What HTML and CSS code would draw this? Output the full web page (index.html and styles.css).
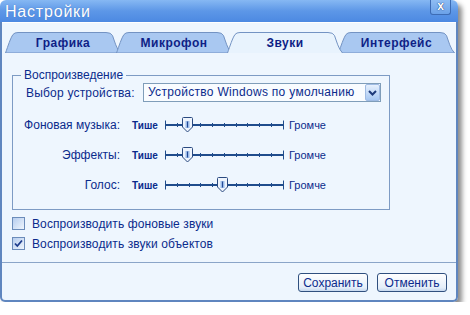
FILE: index.html
```html
<!DOCTYPE html>
<html lang="ru">
<head>
    <meta charset="UTF-8">
    <title>Настройки</title>
    <link rel="stylesheet" href="styles.css">
</head>
<body>
    <div class="window">
        <!-- Title bar -->
        <div class="titlebar">
            <span class="title">Настройки</span>
            <span class="close">x</span>
        </div>

        <div class="frame">
            <!-- Tabs -->
            <div class="tabs">
                <div class="tab">
                    <svg width="116" height="21" viewBox="0 0 116 21"><path class="tab-bg" d="M0.5 21C3 14 5.5 6 8 2.5Q9.5 0.5 13 0.5H101Q106 0.5 107.5 3.5C109.5 9 111.5 17 115.5 21Z"/></svg>
                    <span>Графика</span>
                </div>
                <div class="tab">
                    <svg width="116" height="21" viewBox="0 0 116 21"><path class="tab-bg" d="M0.5 21C3 14 5.5 6 8 2.5Q9.5 0.5 13 0.5H101Q106 0.5 107.5 3.5C109.5 9 111.5 17 115.5 21Z"/></svg>
                    <span>Микрофон</span>
                </div>
                <div class="tab active">
                    <svg width="116" height="21" viewBox="0 0 116 21"><path class="tab-bg" d="M0.5 21C3 14 5.5 6 8 2.5Q9.5 0.5 13 0.5H101Q106 0.5 107.5 3.5C109.5 9 111.5 17 115.5 21"/></svg>
                    <span>Звуки</span>
                </div>
                <div class="tab last">
                    <svg width="117" height="21" viewBox="0 0 117 21"><path class="tab-bg" d="M0.5 21C3 14 5.5 6 8 2.5Q9.5 0.5 13 0.5H102Q107 0.5 108.5 3.5C110.5 9 112.5 17 116.5 21Z"/></svg>
                    <span>Интерфейс</span>
                </div>
            </div>

            <!-- Sound page -->
            <div class="panel">
                <fieldset class="group">
                    <legend>Воспроизведение</legend>

                    <div class="device-row">
                        <span class="device-label">Выбор устройства:</span>
                        <div class="select">
                            <span class="select-value">Устройство Windows по умолчанию</span>
                            <span class="select-btn">
                                <svg width="9" height="6" viewBox="0 0 9 6"><path d="M1 1L4.5 4.5L8 1" fill="none" stroke="#1d3a7a" stroke-width="2"/></svg>
                            </span>
                        </div>
                    </div>

                    <div class="volume-row">
                        <span class="volume-label">Фоновая музыка:</span>
                        <span class="quiet">Тише</span>
                        <svg class="slider" width="119" height="16" viewBox="0 0 119 16">
                            <path class="track" d="M0 8H119"/>
                            <path class="ticks" d="M0.5 3.5V12.5M118.5 3.5V12.5M12.5 6V10M24.5 6V10M35.5 6V10M47.5 6V10M59.5 6V10M71.5 6V10M82.5 6V10M94.5 6V10M106.5 6V10"/>
                            <g transform="translate(22.5 0)">
                                <path class="thumb" d="M-5 1.5Q-5 0.5 -4 0.5H4Q5 0.5 5 1.5V10L0 15L-5 10Z"/>
                                <rect class="thumb-in" x="-2" y="4" width="4" height="7"/>
                                <path class="thumb-line" d="M0 4.5V10.5"/>
                            </g>
                        </svg>
                        <span class="loud">Громче</span>
                    </div>

                    <div class="volume-row">
                        <span class="volume-label">Эффекты:</span>
                        <span class="quiet">Тише</span>
                        <svg class="slider" width="119" height="16" viewBox="0 0 119 16">
                            <path class="track" d="M0 8H119"/>
                            <path class="ticks" d="M0.5 3.5V12.5M118.5 3.5V12.5M12.5 6V10M24.5 6V10M35.5 6V10M47.5 6V10M59.5 6V10M71.5 6V10M82.5 6V10M94.5 6V10M106.5 6V10"/>
                            <g transform="translate(22.5 0)">
                                <path class="thumb" d="M-5 1.5Q-5 0.5 -4 0.5H4Q5 0.5 5 1.5V10L0 15L-5 10Z"/>
                                <rect class="thumb-in" x="-2" y="4" width="4" height="7"/>
                                <path class="thumb-line" d="M0 4.5V10.5"/>
                            </g>
                        </svg>
                        <span class="loud">Громче</span>
                    </div>

                    <div class="volume-row">
                        <span class="volume-label">Голос:</span>
                        <span class="quiet">Тише</span>
                        <svg class="slider" width="119" height="16" viewBox="0 0 119 16">
                            <path class="track" d="M0 8H119"/>
                            <path class="ticks" d="M0.5 3.5V12.5M118.5 3.5V12.5M12.5 6V10M24.5 6V10M35.5 6V10M47.5 6V10M59.5 6V10M71.5 6V10M82.5 6V10M94.5 6V10M106.5 6V10"/>
                            <g transform="translate(57.5 0)">
                                <path class="thumb" d="M-5 1.5Q-5 0.5 -4 0.5H4Q5 0.5 5 1.5V10L0 15L-5 10Z"/>
                                <rect class="thumb-in" x="-2" y="4" width="4" height="7"/>
                                <path class="thumb-line" d="M0 4.5V10.5"/>
                            </g>
                        </svg>
                        <span class="loud">Громче</span>
                    </div>
                </fieldset>

                <div class="check">
                    <span class="box"></span>
                    <span>Воспроизводить фоновые звуки</span>
                </div>
                <div class="check">
                    <span class="box">
                        <svg width="11" height="11" viewBox="0 0 11 11"><path d="M2 5.5L4.3 8L9 2.5" fill="none" stroke="#1d3c8c" stroke-width="1.8"/></svg>
                    </span>
                    <span>Воспроизводить звуки объектов</span>
                </div>
            </div>

            <!-- Buttons -->
            <div class="footer">
                <button class="btn">Сохранить</button>
                <button class="btn">Отменить</button>
            </div>
        </div>
    </div>
</body>
</html>
```

FILE: styles.css
```css
body {
    margin: 0;
    background: #fff;
    font-family: "Liberation Sans", Arial, sans-serif;
    font-size: 12px;
    color: #0b2b8c;
}
.window {
    width: 458px;
    border-radius: 6px 6px 5px 5px;
    box-shadow: 4px 4px 5px rgba(0, 0, 0, 0.45);
}
.titlebar {
    display: flex;
    justify-content: space-between;
    align-items: flex-start;
    height: 22px;
    padding: 0 7px 0 5px;
    background: linear-gradient(#86b8f3, #5d97e7 50%, #4c89e2);
    border-radius: 6px 6px 0 0;
    color: #fff;
}
.title {
    font-size: 16px;
    line-height: 23px;
    letter-spacing: 0.8px;
    text-shadow: 0 0 1px rgba(20, 50, 120, 0.4);
}
.close {
    width: 19px;
    height: 14px;
    border: 1px solid #3d6cb4;
    border-top: 0;
    border-radius: 0 0 3px 3px;
    background: linear-gradient(#8fbdf3, #6ba1e8);
    font: bold 12px/12px "Liberation Sans", Arial, sans-serif;
    text-align: center;
    text-shadow: 0 0 1px #1d3f7a, 0 0 1px #1d3f7a;
}
.frame {
    border: 2px solid #5f86bf;
    border-top: 0;
    border-radius: 0 0 5px 5px;
    background: #eef6fe;
    box-shadow: inset 0 1px 0 #fff;
}
.tabs {
    display: flex;
    padding: 10px 0 0 3px;
}
.tab {
    position: relative;
    width: 116px;
    height: 21px;
    display: flex;
    align-items: center;
    justify-content: center;
    font-weight: bold;
    letter-spacing: 0.5px;
    color: #0f1f86;
}
.tab + .tab {
    margin-left: -5px;
}
.tab.last {
    width: 117px;
}
.tab svg {
    position: absolute;
    left: 0;
    top: 0;
}
.tab span {
    position: relative;
    padding-top: 1px;
}
.tab-bg {
    fill: #a9c8f1;
    stroke: #7393c3;
}
.tab.active {
    z-index: 1;
}
.tab.active .tab-bg {
    fill: #e8f3fd;
}
.panel {
    padding: 15px 0 12px 10px;
}
.group {
    width: 378px;
    box-sizing: border-box;
    margin: 0;
    padding: 0 0 16px 13px;
    border: 1px solid #7d9bc4;
}
.group legend {
    margin-left: -5px;
    padding: 0 3px;
    line-height: 15px;
}
.device-row {
    display: flex;
    align-items: center;
    height: 19px;
}
.device-label {
    width: 117px;
    letter-spacing: 0.2px;
}
.select {
    display: flex;
    width: 238px;
    height: 19px;
    box-sizing: border-box;
    border: 1px solid #7f9db9;
    background: #f9fcff;
}
.select-value {
    flex: 1;
    padding-left: 4px;
    line-height: 17px;
    white-space: nowrap;
    overflow: hidden;
    letter-spacing: 0.3px;
}
.select-btn {
    width: 13px;
    margin: 0 0 0 1px;
    border: 1px solid #9fbbe3;
    border-radius: 2px;
    background: linear-gradient(#e6f0fd, #a6c7f2);
    display: flex;
    align-items: center;
    justify-content: center;
}
.volume-row {
    display: flex;
    align-items: center;
    height: 16px;
    margin: 15px 0 0 -13px;
}
.volume-row + .volume-row {
    margin-top: 14px;
}
.volume-label {
    width: 107px;
    text-align: right;
}
.quiet {
    width: 25px;
    margin-left: 12px;
    font-size: 10px;
    font-weight: bold;
}
.slider {
    margin-left: 8px;
}
.track {
    stroke: #1f4c8c;
    stroke-width: 2;
}
.ticks {
    stroke: #1f4c8c;
    stroke-width: 1;
}
.thumb {
    fill: #eef4fc;
    stroke: #2a4a80;
}
.thumb-in {
    fill: #9bbbe7;
}
.thumb-line {
    stroke: #254a95;
    stroke-width: 1;
}
.loud {
    margin-left: 5px;
    font-size: 11px;
}
.check {
    display: flex;
    align-items: center;
    gap: 7px;
    height: 13px;
    margin-top: 7px;
    letter-spacing: 0.1px;
}
.box {
    width: 13px;
    height: 13px;
    box-sizing: border-box;
    border: 1px solid #6b8cba;
    background: linear-gradient(135deg, #b6cdee, #eef5fd);
}
.box svg {
    display: block;
}
.footer {
    display: flex;
    justify-content: flex-end;
    gap: 9px;
    padding: 10px 9px 8px;
    border-top: 1px solid #8aa5c8;
}
.btn {
    width: 70px;
    height: 19px;
    padding: 0;
    border: 1px solid #30507f;
    border-radius: 3px;
    background: linear-gradient(#ffffff, #e4eef9 80%, #c6d8ef);
    font: 12px "Liberation Sans", Arial, sans-serif;
    color: #0b2b8c;
}
```
